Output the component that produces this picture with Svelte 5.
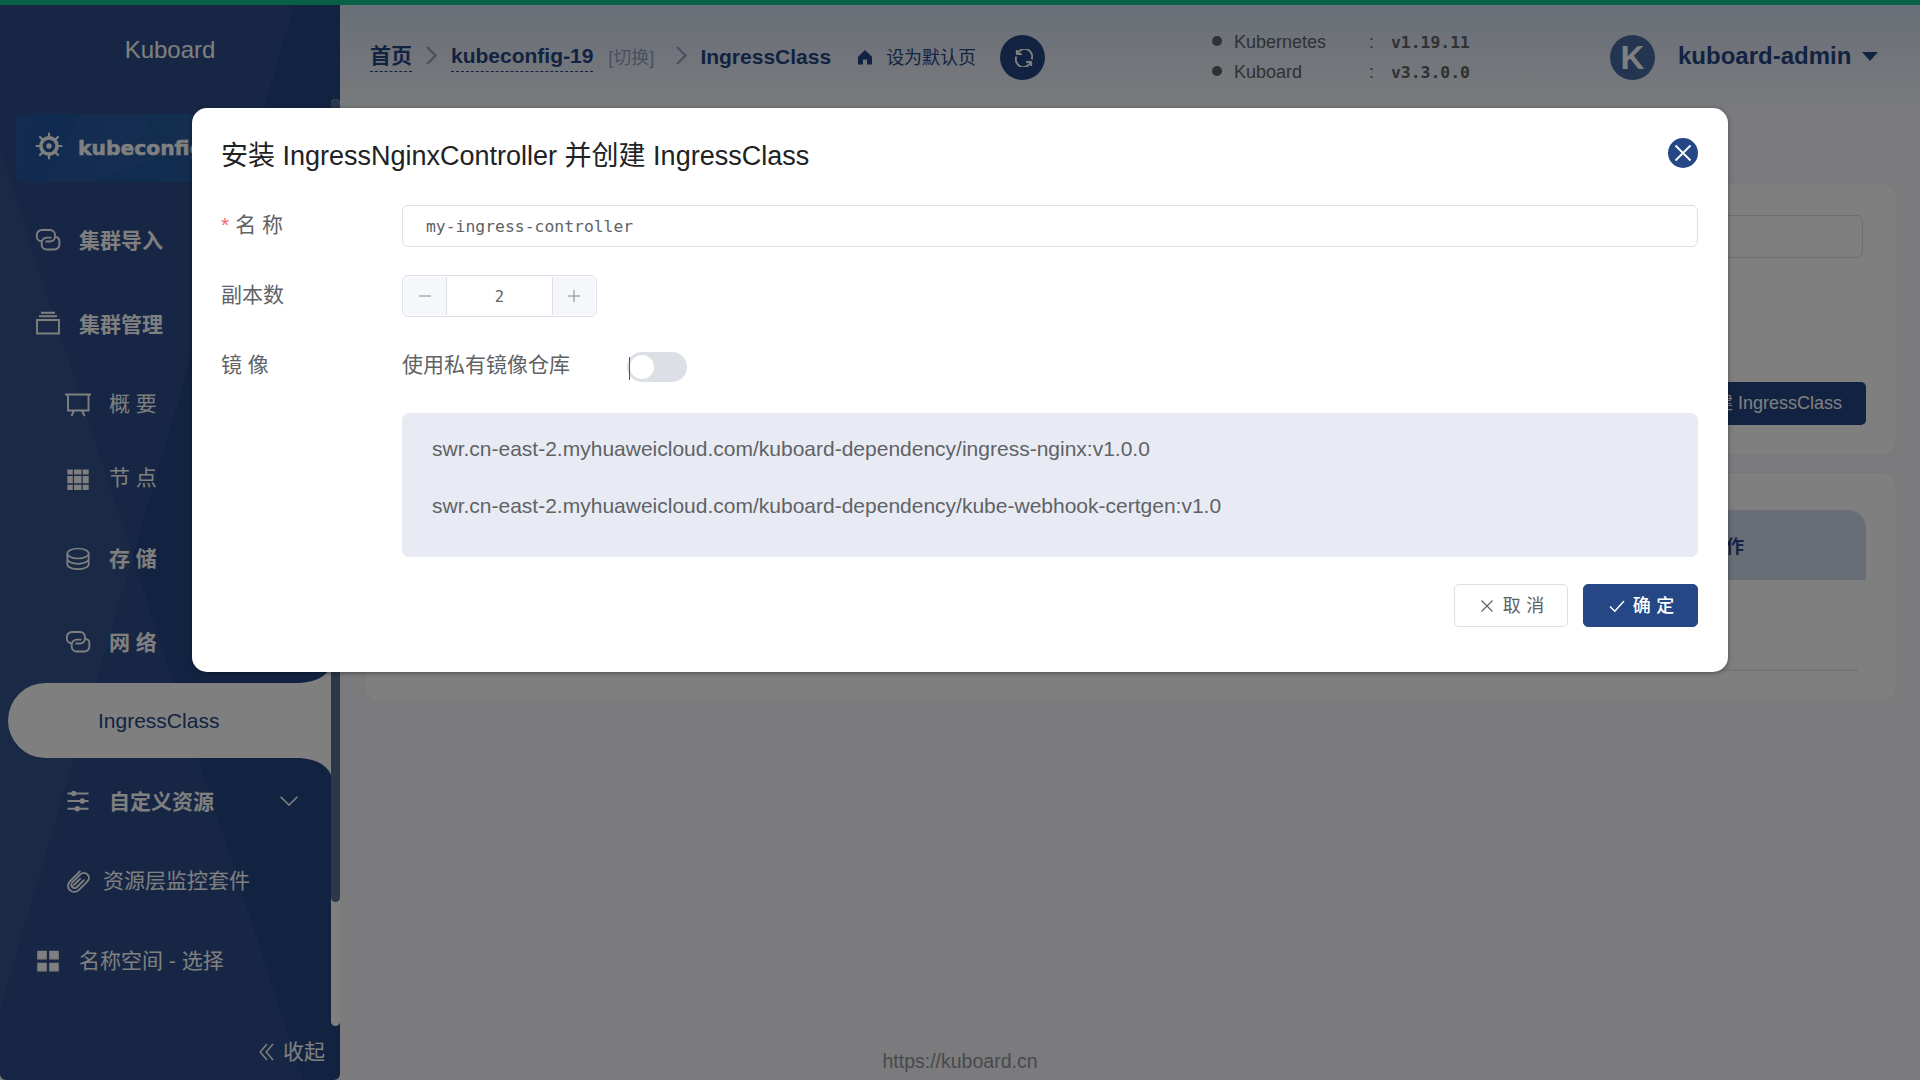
<script>
  const name = 'my-ingress-controller';
  const replicas = 2;
  const images = [
    'swr.cn-east-2.myhuaweicloud.com/kuboard-dependency/ingress-nginx:v1.0.0',
    'swr.cn-east-2.myhuaweicloud.com/kuboard-dependency/kube-webhook-certgen:v1.0'
  ];
  const versions = [
    { label: 'Kubernetes', value: 'v1.19.11' },
    { label: 'Kuboard', value: 'v3.3.0.0' }
  ];
</script>

{#snippet linkIcon()}
  <svg class="ico" viewBox="0 0 26 26" fill="none" stroke="currentColor" stroke-width="1.900">
    <path d="M6.600 14.300A5 5 0 0 1 1.800 9.500V8a5 5 0 0 1 5-5h8.200a5 5 0 0 1 5 5v1.600a5 5 0 0 1-5 4.900h-4.500" />
    <path d="M20.200 9.600a5 5 0 0 1 4.200 4.900V17.500a5 5 0 0 1-5 5h-7.700a5 5 0 0 1-5-5V15.600a5 5 0 0 1 5-5h4.800" />
  </svg>
{/snippet}

<div class="page">
  <div class="progress"></div>
  <div class="shell">
    <aside>
      <svg class="facets" viewBox="0 0 340 1075" preserveAspectRatio="none">
        <polygon points="0,0 294,0 0,1005" />
        <polygon points="0,145 303,1075 0,1075" />
      </svg>
      <div class="brand">Kuboard</div>
      <div class="scroll">
        <nav>
          <div class="cluster">
            <svg class="shards" viewBox="0 0 306 68" preserveAspectRatio="none">
              <polygon points="0,0 18,0 6,68 0,68" />
              <polygon points="64,0 86,0 76,68 30,68" />
              <polygon points="86,0 128,0 150,42 76,68" />
              <polygon points="128,0 306,0 306,68 200,68" />
            </svg>
            <svg class="ico helm" viewBox="0 0 28 28" fill="none" stroke="currentColor">
              <circle cx="14" cy="14" r="8.100" stroke-width="3.600" />
              <circle cx="14" cy="14" r="2.700" fill="currentColor" stroke="none" />
              <path stroke-width="2.200" stroke-linecap="round" d="M14 5V1.500M14 23v3.500M5 14H1.500M23 14h3.500M7.600 7.600 5 5M20.400 7.600 23 5M7.600 20.400 5 23M20.400 20.400 23 23" />
            </svg>
            <span>kubeconfig-19</span>
          </div>
          <div class="row h84 bold">{@render linkIcon()}<span class="low">集群导入</span></div>
          <div class="row h84 bold">
            <svg class="ico" viewBox="0 0 26 26" fill="none" stroke="currentColor" stroke-width="1.900"><path d="M2 9h22v13.500H2zM4 5.200h18M6 1.800h14" /></svg>
            <span class="low">集群管理</span>
          </div>
          <div class="row sub h75">
            <svg class="ico" viewBox="0 0 26 26" fill="none" stroke="currentColor" stroke-width="1.900"><path d="M0 3.500h26M3 3.500v16h20.500v-16M9 19.500 6.500 25M17 19.500l2.500 5.500" /></svg>
            <span>概 要</span>
          </div>
          <div class="row sub h75">
            <svg class="ico" viewBox="0 0 26 26" fill="currentColor"><path d="M2.300 3.500h5.500v5H2.300zM9 3.500h7.500v5H9zM17.700 3.500h6v5h-6zM2.300 9.900h5.500v7.400H2.300zM9 9.900h7.500v7.400H9zM17.700 9.900h6v7.400h-6zM2.300 18.800h5.500v5.200H2.300zM9 18.800h7.500V24H9zM17.700 18.800h6V24h-6z" /></svg>
            <span class="high">节 点</span>
          </div>
          <div class="row sub h85 bold">
            <svg class="ico" viewBox="0 0 26 26" fill="none" stroke="currentColor" stroke-width="1.700"><ellipse cx="13" cy="7.500" rx="10.700" ry="5" /><path d="M2.300 7.500v5.300c0 2.800 4.800 5 10.700 5s10.700-2.200 10.700-5V7.500M2.300 12.500v5.700c0 2.800 4.800 5 10.700 5s10.700-2.200 10.700-5v-5.700" /></svg>
            <span>存 储</span>
          </div>
          <div class="row sub h82 bold">{@render linkIcon()}<span class="low">网 络</span></div>
          <div class="active">
            <svg viewBox="0 0 323 109"><path d="M37.500 17H292Q317 15 323 0V109Q317 94 292 92H37.500A37.500 37.500 0 0 1 37.500 17Z" /></svg>
            <span>IngressClass</span>
          </div>
          <div class="row sub h86 bold">
            <svg class="ico" viewBox="0 0 26 26" fill="none" stroke="currentColor" stroke-width="1.900"><path d="M2.500 5.500h21M2.500 13h21M2.500 20.700h21" /><g fill="currentColor" stroke="none"><circle cx="8.700" cy="5.500" r="2.700" /><circle cx="17.300" cy="13" r="2.700" /><circle cx="12.300" cy="20.700" r="2.700" /></g></svg>
            <span class="low">自定义资源</span>
            <svg class="down" viewBox="0 0 18 10" fill="none" stroke="currentColor" stroke-width="1.600"><path d="M.6.800 9 9 17.400.800" /></svg>
          </div>
          <div class="row sub tight h74">
            <svg class="ico" viewBox="0 0 26 26" fill="none" stroke="currentColor" stroke-width="1.900" stroke-linecap="round"><path d="m14.800 3.400-9.900 9.900a6.200 6.200 0 0 0 8.800 8.800l8.700-8.700a5 5 0 0 0-7.100-7.100l-8 8a3.300 3.300 0 0 0 4.700 4.700l6.800-6.800M8.800 17.200l6.300-6.300" /></svg>
            <span>资源层监控套件</span>
          </div>
          <div class="row h86">
            <svg class="ico" viewBox="0 0 26 26" fill="currentColor"><path d="M2.200 2.800h9.600v8.700H2.200zM14.200 2.800h9.600v8.700h-9.600zM2.200 14.800h9.600v8.700H2.200zM14.200 14.800h9.600v8.700h-9.600z" /></svg>
            <span>名称空间 - 选择</span>
          </div>
        </nav>
        <div class="track"><div class="thumb"></div></div>
      </div>
      <div class="collapse">
        <svg viewBox="0 0 15 18" fill="none" stroke="currentColor" stroke-width="1.500"><path d="M8 1 1.200 9 8 17M14 1 7.200 9 14 17" /></svg>
        <span>收起</span>
      </div>
    </aside>

    <main>
      <header>
        <div class="crumbs">
          <b class="dash">首页</b>
          <svg class="sep" viewBox="0 0 11 19" fill="none" stroke="currentColor" stroke-width="2.400"><path d="m1 1 8.500 8.500L1 18" /></svg>
          <b class="dash k">kubeconfig-19</b>
          <span class="switch-link">[切换]</span>
          <svg class="sep two" viewBox="0 0 11 19" fill="none" stroke="currentColor" stroke-width="2.400"><path d="m1 1 8.500 8.500L1 18" /></svg>
          <b class="cur">IngressClass</b>
          <svg class="home" viewBox="0 0 16 15"><path d="M8 0 15 6.800V14.500H10V9.500H6v5H1V6.800z" fill="currentColor" /></svg>
          <span class="default">设为默认页</span>
          <button class="refresh" aria-label="refresh">
            <svg viewBox="0 0 20 20" fill="none" stroke="currentColor" stroke-width="2.100"><path d="M1.500 5.600h6M2 1v5.200M2.800 5.200A8.200 8.200 0 0 1 18.500 11.500M18.500 14.400h-6M18 19v-5.200M17.200 14.800A8.200 8.200 0 0 1 1.500 8.500" /></svg>
          </button>
        </div>
        <ul class="versions">
          {#each versions as v}
            <li><i></i><span class="vl">{v.label}</span><span class="vc">:</span><code>{v.value}</code></li>
          {/each}
        </ul>
        <div class="user">
          <span class="avatar">K</span>
          <b>kuboard-admin</b>
          <i class="caret"></i>
        </div>
      </header>
      <section class="card one">
        <div class="filter"></div>
        <div class="create">创建 IngressClass</div>
      </section>
      <section class="card two">
        <div class="thead"><span>操作</span></div>
        <div class="tline"></div>
      </section>
    </main>
  </div>
  <footer>https://kuboard.cn</footer>

  <div class="overlay">
    <div class="dialog">
      <div class="title">
        <span>安装 IngressNginxController 并创建 IngressClass</span>
        <button class="close" aria-label="close">
          <svg viewBox="0 0 30 30" fill="none" stroke="#fff" stroke-width="1.800"><path d="m7.500 7.500 15 15M22.500 7.500l-15 15" /></svg>
        </button>
      </div>
      <div class="field">
        <div class="label"><em>*</em>名 称</div>
        <div class="input">{name}</div>
      </div>
      <div class="field">
        <div class="label">副本数</div>
        <div class="number">
          <span class="step"><svg viewBox="0 0 14 14"><path d="M1 7h12" /></svg></span>
          <span class="val">{replicas}</span>
          <span class="step right"><svg viewBox="0 0 14 14"><path d="M1 7h12M7 1v12" /></svg></span>
        </div>
      </div>
      <div class="field last">
        <div class="label">镜 像</div>
        <div class="registry">
          <span>使用私有镜像仓库</span>
          <div class="toggle"><i></i></div>
        </div>
      </div>
      <div class="images">
        {#each images as image}<div>{image}</div>{/each}
      </div>
      <div class="actions">
        <button class="btn">
          <svg viewBox="0 0 14 14"><path d="m1.500 1.500 11 11M12.500 1.500l-11 11" /></svg>取 消
        </button>
        <button class="btn primary">
          <svg class="check" viewBox="0 0 16 14"><path d="m1 7.500 4.800 4.700L15 2" /></svg>确 定
        </button>
      </div>
    </div>
  </div>
</div>

<style>
  :global(body) { background: #f5f6fb; overflow: hidden; }
  * { box-sizing: border-box; }
  .page {
    position: relative; width: 1920px; height: 1080px; overflow: hidden;
    display: flex; flex-direction: column; background: #f6f7fd;
    font: 21px/30px "Liberation Sans", "Noto Sans CJK SC", sans-serif; color: #606266;
  }
  button { font: inherit; color: inherit; padding: 0; border: 0; }
  svg { display: block; flex: none; }
  .progress { height: 5px; background: #10c18d; flex: none; }
  .shell { display: flex; height: 1075px; }

  aside { position: relative; width: 340px; background: #254785; border-radius: 0 0 6px 6px; color: #fff; overflow: hidden; }
  .facets { position: absolute; inset: 0; width: 340px; height: 1075px; fill: rgba(255, 255, 255, .035); }
  .brand { height: 94px; padding-top: 30px; text-align: center; font-size: 24px; position: relative; }
  .scroll { display: flex; height: 927px; position: relative; }
  nav { width: 331px; padding-top: 15px; }
  .track { width: 9px; background: #fff; border-radius: 5px; }
  .thumb { height: 803px; background: #586f91; border-radius: 5px; }
  .cluster {
    position: relative; margin: 0 0 16px 15px; height: 68px; border-radius: 9px; overflow: hidden;
    background: linear-gradient(90deg, #22539f, #265d9f 70%); display: flex; align-items: center; padding-left: 20px;
    font: 700 20.300px/30px "DejaVu Sans", sans-serif;
  }
  .shards { position: absolute; inset: 0; width: 306px; height: 68px; fill: rgba(255, 255, 255, .02); }
  .ico { width: 26px; height: 26px; }
  .helm { width: 28px; height: 28px; margin-bottom: 5px; }
  .cluster span { margin-left: 15px; position: relative; -webkit-text-stroke: .5px currentColor; }
  .row { display: flex; align-items: center; padding-left: 35px; color: #fff; }
  .row span { margin-left: 18px; }
  .row .low { padding-top: 2px; }
  .row .high { padding-bottom: 2px; }
  .row.sub { padding-left: 65px; }
  .row.tight span { margin-left: 12px; }
  .bold { font-weight: 700; }
  .h74 { height: 74px; } .h75 { height: 75px; } .h82 { height: 82px; }
  .h84 { height: 84px; } .h85 { height: 85px; } .h86 { height: 86px; }
  .down { width: 18px; height: 10px; margin-left: auto; margin-right: 33px; }
  .active { position: relative; height: 75px; padding-left: 98px; display: flex; align-items: center; color: #254785; }
  .active svg { position: absolute; left: 8px; top: -17px; width: 323px; height: 109px; fill: #fff; }
  .active span { position: relative; }
  .collapse { display: flex; align-items: center; justify-content: flex-end; gap: 9px; height: 52px; padding-right: 15px; position: relative; }
  .collapse svg { width: 15px; height: 18px; }

  main { width: 1580px; padding: 0 24px; }
  header {
    height: 105px; margin: 0 -24px; padding: 0 40px 0 30px; display: flex; align-items: flex-start;
    background: linear-gradient(#d4dff0, #f3f5fa); color: #254785;
  }
  .crumbs { display: flex; align-items: center; height: 105px; width: 839px; flex: none; }
  .dash { height: 27px; line-height: 22px; border-bottom: 1.500px dashed #254785; margin-top: 2px; }
  .cur { margin-top: -2px; }
  .sep { width: 11px; height: 19px; margin: -4px 14px 0; color: #94a4c0; }
  .switch-link { font-size: 18px; margin-left: 15px; color: #92a3c2; }
  .sep.two { margin-left: 22px; margin-right: 13px; }
  .home { width: 16px; height: 15px; margin-left: 26px; }
  .default { font-size: 18px; margin-left: 13px; }
  .refresh { width: 45px; height: 45px; border-radius: 50%; background: #254785; color: #fff; margin-left: 24px; display: grid; place-items: center; }
  .refresh svg { width: 18px; height: 18px; margin-right: -2px; }
  .versions { list-style: none; margin: 0; padding: 22px 0 0; font-size: 18px; color: #606266; width: 395px; }
  .versions li { display: flex; align-items: center; height: 30px; padding-left: 3px; }
  .versions i { width: 10px; height: 10px; border-radius: 50%; background: #606266; margin-top: -3px; }
  .vl { width: 135px; margin-left: 12px; }
  .vc { width: 22px; }
  .versions code { font: 700 16.400px/30px "DejaVu Sans Mono", monospace; padding-top: 2px; }
  .user { display: flex; align-items: center; height: 105px; margin-left: 6px; font-size: 24px; }
  .avatar { width: 45px; height: 45px; border-radius: 50%; background: #496ba2; color: #fff; font: 700 33px/45px "Liberation Sans", sans-serif; text-align: center; }
  .user b { margin-left: 23px; margin-top: -4px; }
  .caret { border: 8px solid transparent; border-top: 9px solid #254785; border-bottom: 0; margin-left: 11px; margin-top: -3px; }

  .card { background: #fff; border: 1px solid #f0f1f6; border-radius: 15px; margin-right: -1px; }
  .card.one { margin-top: 73px; height: 272px; padding: 31px 30px 0; display: flex; flex-direction: column; align-items: flex-end; }
  .filter { width: 1464px; height: 43px; border: 1.500px solid #dcdfe6; border-radius: 6px; margin-right: 3px; }
  .create { margin-top: 124px; height: 43px; padding: 0 24px; border-radius: 5px; background: #254785; color: #fff; font-size: 18px; line-height: 43px; }
  .card.two { margin-top: 17px; height: 230px; padding: 37px 30px 0 29px; }
  .thead { height: 70px; background: #d3dbeb; border-radius: 18px 18px 0 0; color: #254785; font: 700 18px/70px "Noto Sans CJK SC", sans-serif; text-align: right; padding-right: 122px; }
  .tline { height: 2px; margin: 89px 8px 0; background: #e9ebf5; }
  footer { position: absolute; left: 0; right: 0; top: 1046px; text-align: center; font-size: 19.500px; color: #909399; }

  .overlay { position: absolute; inset: 0; background: rgba(0, 0, 0, .5); padding-top: 108px; }
  .dialog { width: 1536px; height: 564px; margin: 0 auto; background: #fff; border-radius: 15px; padding: 30px 30px 30px 29px; box-shadow: 0 1px 5px rgba(0, 0, 0, .4); }
  .title { display: flex; justify-content: space-between; height: 67px; font-size: 27px; line-height: 34px; color: #212224; }
  .title span { padding-top: 1px; }
  .close { width: 30px; height: 30px; border-radius: 50%; background: #254785; }
  .field { display: flex; height: 42px; margin-bottom: 28px; }
  .label { width: 181px; flex: none; line-height: 40px; }
  .label em { color: #f56c6c; font-style: normal; margin-right: 6px; }
  .input { flex: 1; border: 1.500px solid #dcdfe6; border-radius: 6px; padding-left: 23px; font: 16.400px/41px "DejaVu Sans Mono", monospace; }
  .number { display: flex; width: 195px; border: 1px solid #dcdfe6; border-radius: 6px; overflow: hidden; padding: 1px; }
  .step { width: 43px; background: #f5f7fa; border-right: 1px solid #dcdfe6; display: grid; place-items: center; }
  .step.right { border-right: 0; border-left: 1px solid #dcdfe6; }
  .step svg { width: 14px; height: 14px; stroke: #84868b; }
  .val { flex: 1; text-align: center; font: 15.500px/41px "DejaVu Sans Mono", monospace; }
  .field.last { margin-bottom: 26px; }
  .registry { display: flex; align-items: center; line-height: 40px; }
  .registry span { align-self: flex-start; }
  .toggle { width: 60px; height: 30px; border-radius: 15px; background: #dcdfe6; margin: 2px 0 0 57px; padding: 3px; position: relative; }
  .toggle i { display: block; width: 24px; height: 24px; border-radius: 50%; background: #fff; }
  .toggle::before { content: ""; position: absolute; left: 2px; top: 5px; width: 1px; height: 23px; background: #555; }
  .images { margin-left: 181px; height: 144px; padding: 7px 30px; background: #e8ebf3; border-radius: 7px; line-height: 57px; }
  .actions { display: flex; justify-content: flex-end; gap: 15px; margin-top: 27px; }
  .btn { width: 114px; height: 43px; border: 1px solid #dcdfe6; border-radius: 5px; background: #fff; display: flex; align-items: center; justify-content: center; gap: 9px; font-size: 18px; padding-left: 2px; word-spacing: .5px; }
  .btn.primary { width: 115px; background: #254785; border-color: #254785; color: #fff; font-weight: 500; gap: 8px; }
  .btn svg { width: 14px; height: 14px; fill: none; stroke: currentColor; stroke-width: 1.200; }
  .btn .check { width: 16px; stroke-width: 1.500; }
</style>
